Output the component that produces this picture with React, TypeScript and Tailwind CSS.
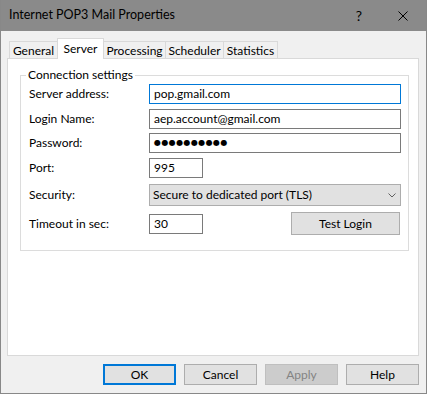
import React from "react";

function Tab({ label, selected, w }: { label: string; selected?: boolean; w: string }) {
  if (selected) {
    return (
      <div className={`${w} h-[21px] -mb-px -ml-px relative z-10 bg-white border-t border-l border-r border-[#d9d9d9] flex items-center justify-center`}>
        {label}
      </div>
    );
  }
  return (
    <div className={`${w} h-[17px] -ml-px first:ml-0 bg-[#f0f0f0] border-t border-l border-r border-[#d9d9d9] flex items-center justify-center pt-[2px]`}>
      {label}
    </div>
  );
}

function Row({ label, h, mb, children }: { label: string; h: string; mb: string; children: React.ReactNode }) {
  return (
    <div className={`flex items-center ${h} ${mb}`}>
      <div className="w-[120px] shrink-0">{label}</div>
      {children}
    </div>
  );
}

export default function App() {
  return (
    <div className="w-[427px] h-[394px] flex flex-col bg-[#f0f0f0] border-l border-r border-b border-[#888888] font-['Lato',sans-serif] text-[12px] text-black leading-none overflow-hidden select-none">
      {/* Title bar */}
      <div className="h-[31px] -mx-px shrink-0 bg-[#8a8a8a] flex items-center pl-[9px] pr-[19px]">
        <span className="text-[12.5px]">Internet POP3 Mail Properties</span>
        <span className="ml-auto text-[14px] mr-[35px] w-[8px] text-center">?</span>
        <svg width="10" height="10" viewBox="0 0 10 10" className="block">
          <path d="M0.5 0.5 L9.5 9.5 M9.5 0.5 L0.5 9.5" stroke="#000" strokeWidth="1" fill="none" />
        </svg>
      </div>

      <div className="flex flex-col pl-[6px] pr-[7px] pt-[7px]">
        {/* Tabs */}
        <div className="flex items-end h-[20px] pl-[2px]">
          <Tab label="General" w="w-[49px]" />
          <Tab label="Server" w="w-[47px]" selected />
          <Tab label="Processing" w="w-[63px]" />
          <Tab label="Scheduler" w="w-[59px]" />
          <Tab label="Statistics" w="w-[55px]" />
        </div>

        {/* Panel */}
        <div className="h-[298px] border border-[#d9d9d9] bg-white pl-[12px] pt-[16px]">
          <div className="relative w-[389px] h-[176px] border border-[#dcdcdc] pt-[8px] pl-[8px] pr-[7px]">
            <span className="absolute left-[5px] -top-[8px] h-[14px] leading-[14px] bg-white px-[2px]">
              Connection settings
            </span>

            <Row label="Server address:" h="h-[20px]" mb="mb-[5px]">
              <div className="w-[252px] h-[20px] border border-[#0078d7] bg-white pl-[4px] flex items-center">pop.gmail.com</div>
            </Row>
            <Row label="Login Name:" h="h-[20px]" mb="mb-[4px]">
              <div className="w-[252px] h-[20px] border border-[#7a7a7a] bg-white pl-[4px] flex items-center">aep.account@gmail.com</div>
            </Row>
            <Row label="Password:" h="h-[20px]" mb="mb-[5px]">
              <div className="w-[252px] h-[20px] border border-[#7a7a7a] bg-white pl-[4px] flex items-center font-['DejaVu_Sans',sans-serif] text-[8px] tracking-[0.4px]">
                ●●●●●●●●●●
              </div>
            </Row>
            <Row label="Port:" h="h-[20px]" mb="mb-[6px]">
              <div className="w-[54px] h-[20px] border border-[#7a7a7a] bg-white pl-[4px] flex items-center">995</div>
            </Row>
            <Row label="Security:" h="h-[22px]" mb="mb-[6px]">
              <div className="w-[252px] h-[22px] border border-[#adadad] bg-[#e1e1e1] pl-[3px] pr-[4px] flex items-center">
                <span>Secure to dedicated port (TLS)</span>
                <svg width="8" height="5" viewBox="0 0 8 5" className="ml-auto block">
                  <path d="M0.5 0.5 L4 4 L7.5 0.5" stroke="#606060" strokeWidth="1" fill="none" />
                </svg>
              </div>
            </Row>
            <Row label="Timeout in sec:" h="h-[23px]" mb="mb-0">
              <div className="w-[54px] h-[20px] border border-[#7a7a7a] bg-white pl-[4px] flex items-center">30</div>
              <div className="ml-auto mr-[1px] w-[109px] h-[23px] border border-[#adadad] bg-[#e1e1e1] flex items-center justify-center">
                Test Login
              </div>
            </Row>
          </div>
        </div>

        {/* Buttons */}
        <div className="flex justify-end gap-[8px] pt-[8px]">
          <div className="w-[73px] h-[21px] border-2 border-[#0078d7] bg-[#e1e1e1] flex items-center justify-center">OK</div>
          <div className="w-[73px] h-[21px] border border-[#adadad] bg-[#e1e1e1] flex items-center justify-center">Cancel</div>
          <div className="w-[73px] h-[21px] border border-[#bfbfbf] bg-[#cccccc] text-[#838383] flex items-center justify-center">Apply</div>
          <div className="w-[73px] h-[21px] border border-[#adadad] bg-[#e1e1e1] flex items-center justify-center">Help</div>
        </div>
      </div>
    </div>
  );
}
